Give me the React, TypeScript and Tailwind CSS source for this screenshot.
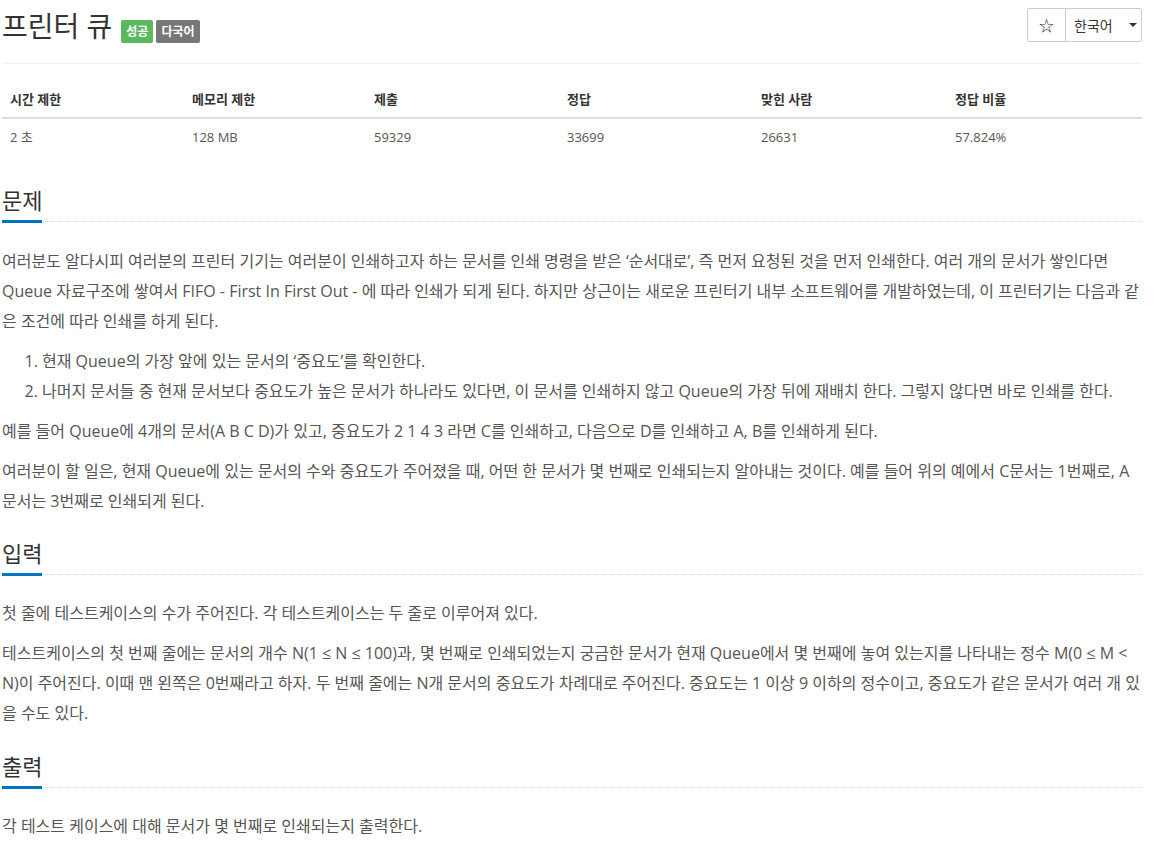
import React from "react";

const FONT = { fontFamily: '"Open Sans", "Noto Sans CJK KR", sans-serif' };

function Heading({ children }: { children: React.ReactNode }) {
  return (
    <div className="border-b border-dotted border-[#dddddd]">
      <h2 className="inline-block border-b-[3px] border-[#0076c0] -mb-[2px] pb-[5px] text-[22px] leading-[30px] text-[#333333] font-normal">
        {children}
      </h2>
    </div>
  );
}

export default function App() {
  const cols = [
    ["시간 제한", "2 초"],
    ["메모리 제한", "128 MB"],
    ["제출", "59329"],
    ["정답", "33699"],
    ["맞힌 사람", "26631"],
    ["정답 비율", "57.824%"],
  ];
  return (
    <div className="min-h-[852px] bg-white" style={FONT}>
      <div className="ml-[2px] w-[1140px] pt-[8px]">
        <div className="flex items-start justify-between">
          <div className="flex items-end gap-[3px]">
            <h1 className="text-[28px] leading-[36px] text-[#333333] font-normal mr-[6px]">프린터 큐</h1>
            <span className="mb-[1px] flex h-[23px] items-center rounded-[2px] bg-[#5cb85c] px-[5px] text-[12px] font-bold text-white">성공</span>
            <span className="mb-[1px] flex h-[23px] items-center rounded-[2px] bg-[#777777] px-[5px] text-[12px] font-bold text-white">다국어</span>
          </div>
          <div className="flex h-[34px] border border-[#cccccc] rounded-[2px] mr-0">
            <div className="flex w-[38px] items-center justify-center border-r border-[#cccccc] text-[15px] text-[#333333]">☆</div>
            <div className="flex w-[75px] items-center pl-[8px] text-[14px] text-[#333333]">
              한국어
              <span className="ml-[16px] h-0 w-0 border-l-[4px] border-r-[4px] border-t-[4px] border-l-transparent border-r-transparent border-t-[#333333]" />
            </div>
          </div>
        </div>
        <div className="mt-[19px] border-b border-[#eeeeee]" />
        <div className="mt-[17px] text-[13px]">
          <div className="grid grid-cols-[182px_182px_193px_194px_194px_195px] border-b-2 border-[#dddddd]">
            {cols.map((c) => (
              <div key={c[0]} className="px-[8px] py-[8px] leading-[20px] font-bold text-[#333333]">{c[0]}</div>
            ))}
          </div>
          <div className="grid grid-cols-[182px_182px_193px_194px_194px_195px]">
            {cols.map((c) => (
              <div key={c[0]} className="px-[8px] py-[8px] leading-[20px] text-[#555555]">{c[1]}</div>
            ))}
          </div>
        </div>

        <div className="text-[16px] leading-[30px] text-[#555555]">
          <div className="mt-[30px]">
            <Heading>문제</Heading>
          </div>
          <div className="mt-[24px]">
            <p className="mb-[10px] whitespace-nowrap">
              여러분도 알다시피 여러분의 프린터 기기는 여러분이 인쇄하고자 하는 문서를 인쇄 명령을 받은 ‘순서대로’, 즉 먼저 요청된 것을 먼저 인쇄한다. 여러 개의 문서가 쌓인다면
              <br />
              Queue 자료구조에 쌓여서 FIFO - First In First Out - 에 따라 인쇄가 되게 된다. 하지만 상근이는 새로운 프린터기 내부 소프트웨어를 개발하였는데, 이 프린터기는 다음과 같
              <br />
              은 조건에 따라 인쇄를 하게 된다.
            </p>
            <ol className="mb-[10px] list-decimal pl-[40px]">
              <li>현재 Queue의 가장 앞에 있는 문서의 ‘중요도’를 확인한다.</li>
              <li>나머지 문서들 중 현재 문서보다 중요도가 높은 문서가 하나라도 있다면, 이 문서를 인쇄하지 않고 Queue의 가장 뒤에 재배치 한다. 그렇지 않다면 바로 인쇄를 한다.</li>
            </ol>
            <p className="mb-[10px]">예를 들어 Queue에 4개의 문서(A B C D)가 있고, 중요도가 2 1 4 3 라면 C를 인쇄하고, 다음으로 D를 인쇄하고 A, B를 인쇄하게 된다.</p>
            <p className="mb-[10px] whitespace-nowrap">
              여러분이 할 일은, 현재 Queue에 있는 문서의 수와 중요도가 주어졌을 때, 어떤 한 문서가 몇 번째로 인쇄되는지 알아내는 것이다. 예를 들어 위의 예에서 C문서는 1번째로, A
              <br />
              문서는 3번째로 인쇄되게 된다.
            </p>
          </div>

          <div className="mt-[22px]">
            <Heading>입력</Heading>
          </div>
          <div className="mt-[23px]">
            <p className="mb-[10px]">첫 줄에 테스트케이스의 수가 주어진다. 각 테스트케이스는 두 줄로 이루어져 있다.</p>
            <p className="mb-[10px] whitespace-nowrap">
              테스트케이스의 첫 번째 줄에는 문서의 개수 N(1 ≤ N ≤ 100)과, 몇 번째로 인쇄되었는지 궁금한 문서가 현재 Queue에서 몇 번째에 놓여 있는지를 나타내는 정수 M(0 ≤ M &lt;
              <br />
              N)이 주어진다. 이때 맨 왼쪽은 0번째라고 하자. 두 번째 줄에는 N개 문서의 중요도가 차례대로 주어진다. 중요도는 1 이상 9 이하의 정수이고, 중요도가 같은 문서가 여러 개 있
              <br />
              을 수도 있다.
            </p>
          </div>

          <div className="mt-[23px]">
            <Heading>출력</Heading>
          </div>
          <div className="mt-[23px]">
            <p className="mb-[10px]">각 테스트 케이스에 대해 문서가 몇 번째로 인쇄되는지 출력한다.</p>
          </div>
        </div>
      </div>
    </div>
  );
}
